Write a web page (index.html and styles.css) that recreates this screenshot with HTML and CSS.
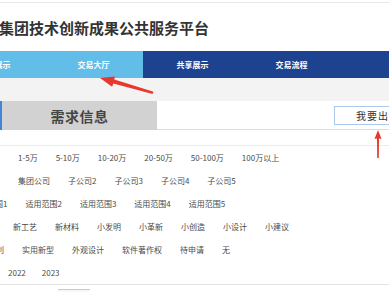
FILE: index.html
```html
<!DOCTYPE html>
<html lang="zh-CN">
<head>
    <meta charset="UTF-8">
    <meta name="viewport" content="width=device-width, initial-scale=1.0">
    <title>集团技术创新成果公共服务平台 - 交易大厅</title>
    <link rel="stylesheet" href="styles.css">
</head>
<body>
    <div class="page">
        <header class="header">
            <h1 class="site-title">集团技术创新成果公共服务平台</h1>
        </header>

        <nav class="nav">
            <a class="nav-item light" href="#">成果展示</a>
            <a class="nav-item light" href="#">交易大厅</a>
            <a class="nav-item" href="#">共享展示</a>
            <a class="nav-item" href="#">交易流程</a>
        </nav>

        <div class="gap-band"></div>

        <section class="content">
            <div class="tab-bar">
                <div class="tab active">需求信息</div>
                <a class="sell-btn" href="#">我要出售</a>
            </div>

            <div class="filters">
                <div class="filter-row row-price">
                    <span>1-5万</span><span>5-10万</span><span>10-20万</span><span>20-50万</span><span>50-100万</span><span>100万以上</span>
                </div>
                <div class="filter-row row-unit">
                    <span>集团公司</span><span>子公司2</span><span>子公司3</span><span>子公司4</span><span>子公司5</span>
                </div>
                <div class="filter-row row-scope">
                    <span>适用范围1</span><span>适用范围2</span><span>适用范围3</span><span>适用范围4</span><span>适用范围5</span>
                </div>
                <div class="filter-row row-type">
                    <span>新工艺</span><span>新材料</span><span>小发明</span><span>小革新</span><span>小创造</span><span>小设计</span><span>小建议</span>
                </div>
                <div class="filter-row row-patent">
                    <span>发明专利</span><span>实用新型</span><span>外观设计</span><span>软件著作权</span><span>待申请</span><span>无</span>
                </div>
                <div class="filter-row row-year">
                    <span>2022</span><span>2023</span>
                </div>
            </div>

            <div class="list-head">
                <div class="list-tab"></div>
            </div>
        </section>

        <!-- annotation arrows -->
        <svg class="marks" width="389" height="292" viewBox="0 0 389 292">
            <polygon points="100,78 114.9,76.6 114.3,79.6 153.5,91.8 152.6,94 113.4,83.6 112.1,86.8" fill="#e8382c"/>
            <polygon points="378,130 381.5,139 379,138.5 378.8,158 377.2,158 377,138.5 374.5,139" fill="#e8382c"/>
        </svg>
    </div>
</body>
</html>
```

FILE: styles.css
```css
:root {
    --text-color: #333;
    --muted-text: #4a4a4a;
    --nav-light: #63bde9;
    --nav-dark: #1c4290;
    --line-color: #e2e2e2;
    --band-bg: #f3f3f3;
}

* {
    margin: 0;
    padding: 0;
    box-sizing: border-box;
}

body {
    font-family: "Noto Sans CJK SC", "Noto Sans", sans-serif;
    color: var(--text-color);
    background: #fff;
}

.page {
    position: relative;
    width: 389px;
    height: 292px;
    overflow: hidden;
}

.header {
    height: 52px;
    margin-top: 2px;
    border-top: 1px solid #e8e8e8;
    display: flex;
    align-items: center;
    padding-bottom: 2px;
}

.site-title {
    font-size: 15px;
    font-weight: bold;
    color: #333;
    margin-left: -1px;
    letter-spacing: 0;
    white-space: nowrap;
}

.nav {
    display: flex;
    height: 27px;
    margin-top: -3px;
    margin-left: -55px;
    width: 460px;
    background: var(--nav-dark);
}

.nav-item {
    width: 99px;
    flex: none;
    display: flex;
    align-items: center;
    justify-content: center;
    color: #fff;
    font-size: 8px;
    font-weight: bold;
    text-decoration: none;
    white-space: nowrap;
}

.nav-item.light {
    background: var(--nav-light);
}

.gap-band {
    height: 23px;
    background: var(--band-bg);
}

.tab-bar {
    display: flex;
    align-items: flex-start;
    height: 29px;
    border-bottom: 1px solid #dcdcdc;
    width: 480px;
}

.tab {
    width: 157px;
    height: 29px;
    background: #d2d2d2;
    border-left: 2px solid #3f86d6;
    display: flex;
    align-items: center;
    justify-content: center;
    font-size: 14px;
    font-weight: bold;
    color: #444;
    letter-spacing: 0.5px;
}

.sell-btn {
    margin-left: 177px;
    margin-top: 5px;
    width: 90px;
    height: 19px;
    border: 1px solid #a9c8ec;
    background: #fff;
    display: flex;
    align-items: center;
    padding-left: 21px;
    font-size: 10px;
    letter-spacing: 1px;
    color: #333;
    text-decoration: none;
    white-space: nowrap;
}

.filters {
    margin-top: 15px;
    border-top: 1px solid #ececec;
    border-bottom: 1px solid var(--line-color);
}

.filter-row {
    display: flex;
    align-items: center;
    gap: 18px;
    height: 23px;
    font-size: 8px;
    color: var(--muted-text);
    white-space: nowrap;
}

.row-price { padding-left: 18px; }
.row-unit { padding-left: 18px; }
.row-scope { margin-left: -29px; }
.row-type { padding-left: 13px; }
.row-patent { margin-left: -28px; }
.row-year { padding-left: 8px; gap: 16px; }

.list-head {
    height: 10px;
    padding-top: 4px;
}

.list-tab {
    margin-left: 58px;
    width: 32px;
    height: 6px;
    border-top: 1px solid #b9cde6;
    background: #f4f7fb;
}

.marks {
    position: absolute;
    top: 0;
    left: 0;
    pointer-events: none;
}
```
